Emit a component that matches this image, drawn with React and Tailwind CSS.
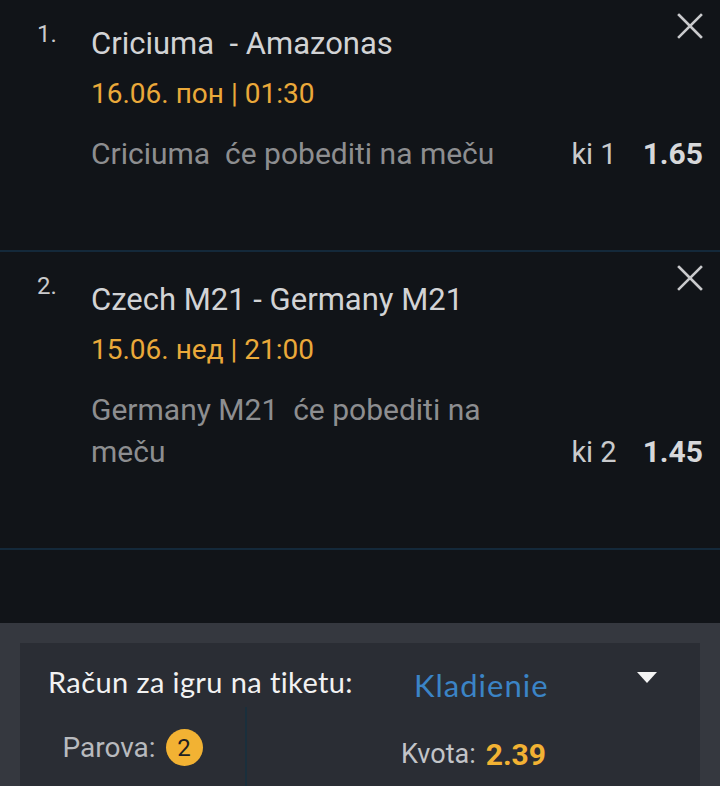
const bets = [
  {
    n: "1.",
    teams: "Criciuma  - Amazonas",
    date: "16.06. пон | 01:30",
    pick: "Criciuma  će pobediti na meču",
    tip: "ki 1",
    odd: "1.65",
    pt: "pt-[23px]",
  },
  {
    n: "2.",
    teams: "Czech M21 - Germany M21",
    date: "15.06. нед | 21:00",
    pick: "Germany M21  će pobediti na meču",
    tip: "ki 2",
    odd: "1.45",
    pt: "pt-[27px]",
  },
];

const CloseIcon = () => (
  <svg width="26" height="26" viewBox="0 0 26 26" className="text-[#c9cacc]">
    <path d="M2 2 L24 24 M24 2 L2 24" stroke="currentColor" strokeWidth="2.6" strokeLinecap="square" />
  </svg>
);

const BetRow = ({ bet }) => (
  <div className={`relative ${bet.pt} pb-[75px] pl-[91px] pr-[17px] border-b-2 border-[#14293a]`}>
    <span className="absolute left-[37px] top-[18px] text-[24px] leading-[32px] text-[#c9cacc]">{bet.n}</span>
    <button className="absolute right-[17px] top-[13px]" aria-label="Ukloni">
      <CloseIcon />
    </button>
    <div className="whitespace-pre text-[31px] leading-[42px] text-[#d2d3d5]">{bet.teams}</div>
    <div className="mt-2 text-[28px] leading-[42px] text-[#eaa93a]">{bet.date}</div>
    <div className="mt-[18px] flex items-end justify-between">
      <div className="w-[440px] whitespace-pre-wrap text-[30px] leading-[42px] text-[#8d8e90]">{bet.pick}</div>
      <div className="flex items-baseline gap-[26px] text-[29px] leading-[42px]">
        <span className="text-[#c9cacc]">{bet.tip}</span>
        <span className="font-bold text-[30px] text-[#d7d8da]">{bet.odd}</span>
      </div>
    </div>
  </div>
);

export default function App() {
  return (
    <div className="h-[786px] overflow-hidden flex flex-col bg-[#111418] font-['Roboto',sans-serif]">
      <div className="h-[623px] shrink-0">
        {bets.map((b) => (
          <BetRow key={b.n} bet={b} />
        ))}
      </div>

      <div className="flex-1 bg-[#35383f] pt-5 px-5">
        <div className="h-full bg-[#2a2d34]">
          <div className="flex items-center pl-[28px] pr-[43px] pt-[13px] h-[64px]">
            <span className="w-[340px] shrink-0 font-['Lato',sans-serif] text-[29px] tracking-[0.4px] text-[#f2f2f2]">
              Račun za igru na tiketu:
            </span>
            <span className="ml-[26px] mt-[8px] font-['Lato',sans-serif] text-[31px] tracking-[1px] text-[#3b84c6]">
              Kladienie
            </span>
            <svg width="20" height="11" viewBox="0 0 20 11" className="ml-auto -mt-[8px]">
              <path d="M0 0 H20 L10 11 Z" fill="#f4f4f4" />
            </svg>
          </div>
          <div className="grid grid-cols-[227px_1fr] h-[80px] mt-[1px]">
            <div className="flex items-center justify-center gap-[10px] border-r-2 border-[#1a2f3c] -mt-[1px]">
              <span className="text-[28px] text-[#b8babe]">Parova:</span>
              <span className="w-[37px] h-[37px] rounded-full bg-[#f2b233] flex items-center justify-center text-[24px] text-[#1e1f22]">
                2
              </span>
            </div>
            <div className="flex items-center justify-center pt-[12px]">
              <span className="text-[27px] text-[#c2c4c8]">Kvota:</span>
              <span className="ml-[10px] font-bold text-[30px] text-[#f2b233]">2.39</span>
            </div>
          </div>
        </div>
      </div>
    </div>
  );
}
